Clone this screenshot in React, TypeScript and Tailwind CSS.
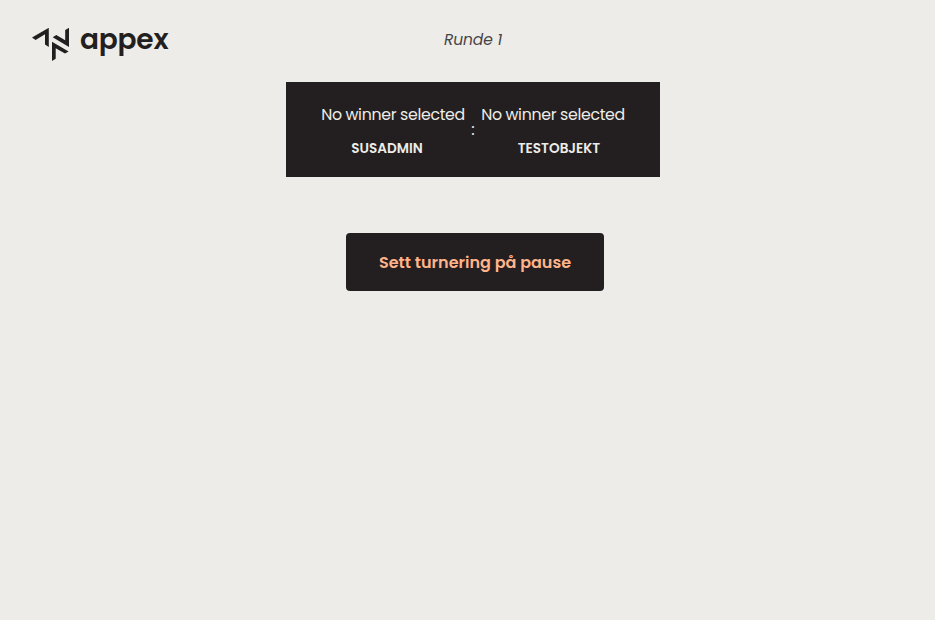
function Logo() {
  return (
    <div className="flex w-[254px] items-start">
      <svg width="37" height="34" viewBox="32 28 37 34" className="mt-7 shrink-0" fill="#231f20">
        <path d="M32 37.6 48.8 27.8V47L45 44.5V34.2L35.6 39.9Z" />
        <path d="M69 27.8V47L52.7 37.2 56.3 35 65.2 40.2V30Z" />
        <path d="M52 41.7 68.6 51.4 65 53.6 55.7 48.2V58.8L52 61Z" />
      </svg>
      <span className="mt-[22px] ml-[11px] text-[28px] leading-9 font-semibold tracking-[-0.2px]">appex</span>
    </div>
  );
}

function Player({ name, shift }: { name: string; shift: string }) {
  return (
    <div className="flex w-36 flex-col items-center whitespace-nowrap">
      <span className="text-[15.75px] leading-6 tracking-[-0.32px]">No winner selected</span>
      <span className={`mt-[10px] text-[13.6px] leading-6 font-semibold ${shift}`}>{name}</span>
    </div>
  );
}

export default function App() {
  return (
    <div className="min-h-screen bg-[#edece8] pl-8 font-['Poppins',Inter,sans-serif] text-[#231f20] [font-feature-settings:'cv11']">
      <div className="flex h-[82px] items-start">
        <Logo />
        <div className="flex w-[374px] justify-center pt-7">
          <span className="text-[15.5px] leading-6 tracking-[-0.1px] text-[#484446] italic">Runde 1</span>
        </div>
      </div>
      <div className="ml-[254px] flex h-[95px] w-[374px] justify-center bg-[#231f20] pt-[21px] text-[#edece8]">
        <Player name="SUSADMIN" shift="mr-3" />
        <span className="mt-[15px] w-4 text-center text-base leading-6">:</span>
        <Player name="TESTOBJEKT" shift="ml-3" />
      </div>
      <button className="mt-14 ml-[314px] flex h-[58px] w-[258px] items-center justify-center rounded bg-[#231f20] pt-0.5 text-base font-semibold whitespace-nowrap text-[#ffb38a]">
        Sett turnering på pause
      </button>
    </div>
  );
}
